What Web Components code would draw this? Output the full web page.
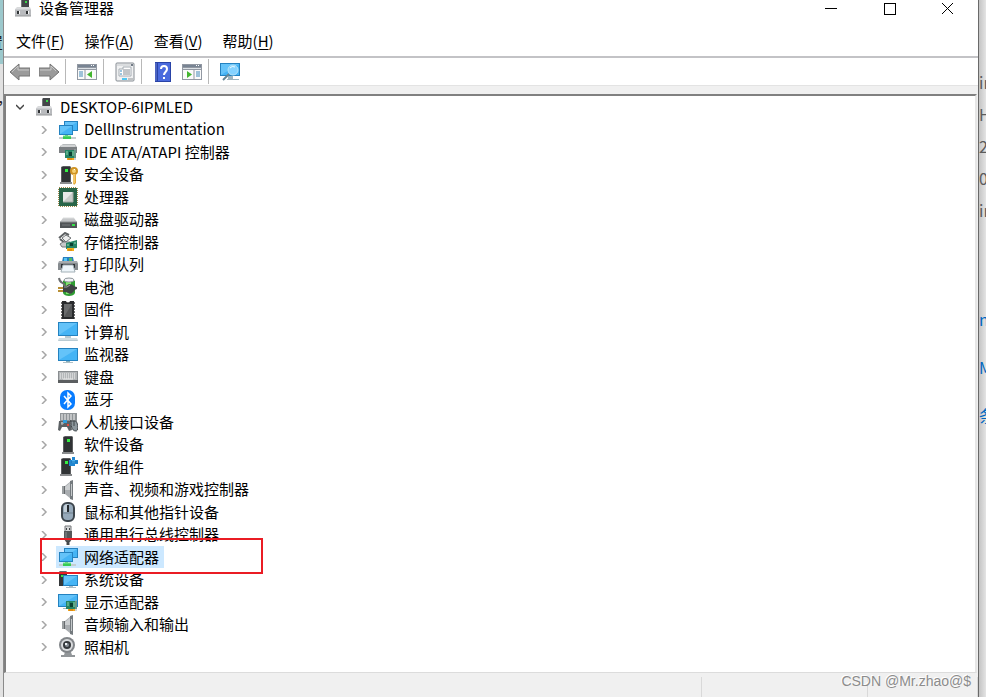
<!DOCTYPE html>
<html lang="zh-CN">
<head>
<meta charset="utf-8">
<meta name="viewport" content="width=device-width, initial-scale=1">
<title>设备管理器</title>
<style>
  html, body {
    height: 100%;
    margin: 0;
  }

  body {
    --color-bar: #f0f0f0;
    --color-line: #c3c3c6;
    --color-select: #cce8ff;
    display: grid;
    grid-template-columns: 4px minmax(0, 1fr) 7px;
    background: #e2e2e2;
    color: #000;
    font: 15px/20px "Noto Sans CJK SC", sans-serif;
    overflow: hidden;
  }
</style>
</head>
<body>
  <back-window side="left">
    <span>置</span>
    <span>,</span>
  </back-window>

  <device-manager heading="设备管理器">
    <menu-bar slot="menu">
      <menu-item key="F">文件</menu-item>
      <menu-item key="A">操作</menu-item>
      <menu-item key="V">查看</menu-item>
      <menu-item key="H">帮助</menu-item>
    </menu-bar>
    <tool-bar slot="tools">
      <tool-button icon="back" label="后退"></tool-button>
      <tool-button icon="forward" label="前进"></tool-button>
      <tool-separator></tool-separator>
      <tool-button icon="console" label="显示/隐藏控制台树"></tool-button>
      <tool-separator></tool-separator>
      <tool-button icon="properties" label="属性"></tool-button>
      <tool-separator></tool-separator>
      <tool-button icon="help" label="帮助"></tool-button>
      <tool-button icon="action" label="操作窗格"></tool-button>
      <tool-separator></tool-separator>
      <tool-button icon="scan" label="扫描检测硬件改动"></tool-button>
    </tool-bar>
    <device-node icon="computer" label="DESKTOP-6IPMLED" open>
      <device-node icon="network" label="DellInstrumentation"></device-node>
      <device-node icon="ide" label="IDE ATA/ATAPI 控制器"></device-node>
      <device-node icon="security" label="安全设备"></device-node>
      <device-node icon="cpu" label="处理器"></device-node>
      <device-node icon="disk" label="磁盘驱动器"></device-node>
      <device-node icon="storage" label="存储控制器"></device-node>
      <device-node icon="printer" label="打印队列"></device-node>
      <device-node icon="battery" label="电池"></device-node>
      <device-node icon="firmware" label="固件"></device-node>
      <device-node icon="desktop" label="计算机"></device-node>
      <device-node icon="monitor" label="监视器"></device-node>
      <device-node icon="keyboard" label="键盘"></device-node>
      <device-node icon="bluetooth" label="蓝牙"></device-node>
      <device-node icon="hid" label="人机接口设备"></device-node>
      <device-node icon="software" label="软件设备"></device-node>
      <device-node icon="component" label="软件组件"></device-node>
      <device-node icon="speaker" label="声音、视频和游戏控制器"></device-node>
      <device-node icon="mouse" label="鼠标和其他指针设备"></device-node>
      <device-node icon="usb" label="通用串行总线控制器"></device-node>
      <device-node icon="network" label="网络适配器" selected marked></device-node>
      <device-node icon="system" label="系统设备"></device-node>
      <device-node icon="display" label="显示适配器"></device-node>
      <device-node icon="speaker" label="音频输入和输出"></device-node>
      <device-node icon="camera" label="照相机"></device-node>
    </device-node>
    <status-bar slot="status"></status-bar>
  </device-manager>

  <back-window side="right">
    <span>in</span>
    <span>H</span>
    <span>2</span>
    <span>0</span>
    <span>in</span>
    <a slot="links" href="#">nd</a>
    <a slot="links" href="#">M</a>
    <a slot="links" href="#">条</a>
  </back-window>

  <water-mark>CSDN @Mr.zhao@$</water-mark>

<script>
// Shapes shared by several icons
const SCREEN = (x, y, w, h) => `
  <rect x="${x}" y="${y}" width="${w}" height="${h}" fill="#2482c0"/>
  <rect x="${x + 1}" y="${y + 1}" width="${w - 2}" height="${h - 2}" fill="#45b4f5"/>
  <path d="M${x + 1} ${y + h - 1}V${y + 1}h${w - 2}z" fill="#74cbfb" opacity=".65"/>`;

const TOWER = (x) => `
  <path d="M${x} 2l2-1h7l1 1v15h-10z" fill="#5b5d5f"/>
  <rect x="${x + 1}" y="2" width="8" height="15" fill="#303335"/>
  <rect x="${x + 4}" y="4" width="3" height="3" fill="#34ef43"/>
  <path d="M${x - 1} 17h12v2h-12z" fill="#8a8c8e"/>`;

const CARD = (x, y) => `
  <path d="M${x + 2} ${y + 7}h7v3h-7z" fill="#f3a51c"/>
  <path d="M${x + 4} ${y + 8}v2M${x + 6} ${y + 8}v2" stroke="#c77309"/>
  <path d="M${x} ${y}h11v8h-11z" fill="#258465"/>
  <path d="M${x + 1} ${y + 2}h2M${x + 1} ${y + 4}h2M${x + 8} ${y + 1}v5" stroke="#91d2a8"/>
  <rect x="${x + 4}" y="${y + 2}" width="3" height="4" fill="#0a4132"/>
  <path d="M${x + 10} ${y - 1}v11" stroke="#a8acae"/>`;

const COMPUTER = `
  <path d="M9 1h7v10h-7z" fill="#44474a"/>
  <path d="M8 2l1-1v10h-1z" fill="#75787a"/>
  <rect x="12" y="3" width="2" height="2" fill="#39db49"/>
  <path d="M3 10l1-1h13l1 3v6h-15z" fill="#d8dadb"/>
  <path d="M2 11h16v7h-16z" fill="#b9bbbe"/>
  <path d="M2 11h16" stroke="#dedfe1"/>
  <path d="M4 13h2v3h-2zM13 13h2v3h-2z" fill="#303335"/>
  <path d="M6 13h1v3h-1zM15 13h1v3h-1z" fill="#f7f7f7"/>
  <path d="M2 18h16" stroke="#96989a"/>`;

const PANE = `
  <path d="M0 2h20v16h-20z" fill="#9298a2"/>
  <path d="M1 3h18v2h-18z" fill="#788493"/>
  <path d="M14 3h1v1h-1zM16 3h1v1h-1z" fill="#fff"/>
  <path d="M1 6h18v1h-18z" fill="#dbe1e6"/>
  <path d="M1 8h18v9h-18z" fill="#fafafa"/>`;

const ICONS = {
  computer: COMPUTER,
  back: `
    <path d="M0 10L9 2v4h11v8h-11v4z" fill="#9b9b9b" stroke="#747474" stroke-linejoin="round"/>
    <path d="M2 10l6-6v4h11" fill="none" stroke="#c8c8c8"/>`,
  forward: `
    <path d="M20 10L11 2v4h-11v8h11v4z" fill="#9b9b9b" stroke="#747474" stroke-linejoin="round"/>
    <path d="M1 8h11v-4l5 5" fill="none" stroke="#c8c8c8"/>`,
  console: `${PANE}
    <path d="M2 10h4M2 12h4M2 14h4" stroke="#4389b8"/>
    <path d="M8 8v9" stroke="#9298a2"/>
    <path d="M15 9v7l-5-3.500z" fill="#43b52f"/>`,
  action: `${PANE}
    <path d="M14 10h4M14 12h4M14 14h4" stroke="#4389b8"/>
    <path d="M12 8v9" stroke="#9298a2"/>
    <path d="M5 9v7l5-3.500z" fill="#43b52f"/>`,
  properties: `
    <rect x="1" y="1" width="18" height="18" rx="1" fill="#f0f1f2" stroke="#858b92"/>
    <path d="M2 3h15" stroke="#c4c8cc"/>
    <path d="M16 2h2v2h-2z" fill="#717b86"/>
    <path d="M4 7h4v-2h8v9h-12z" fill="#fff" stroke="#a5acb3"/>
    <path d="M5 9h2M5 12h2" stroke="#398bbf"/>
    <path d="M8 8h7M8 10h7M8 12h7" stroke="#848b92"/>
    <path d="M7 16h5v2h-5z" fill="#51c7f2"/>
    <path d="M13 16h5v2h-5z" fill="#bfc2c4"/>`,
  help: `
    <path d="M2 0h16v20h-16z" fill="#2943a7"/>
    <path d="M5 1h12v18h-12z" fill="#4a6add"/>
    <path d="M3 1v18" stroke="#7087db"/>
    <path d="M8 7c0-4 6-4 6 0 0 3-3 3-3 6" fill="none" stroke="#fff" stroke-width="2"/>
    <rect x="10" y="15" width="2" height="2" fill="#fff"/>`,
  scan: `
    ${SCREEN(0, 1, 20, 13)}
    <path d="M8 14h5v3h-5zM7 17h12v1h-12z" fill="#9eb5bf"/>
    <circle cx="13" cy="8" r="5" fill="#84d2ff" stroke="#b4e2f8"/>
    <path d="M9 12l-6 6" stroke="#648594" stroke-width="2"/>
    <path d="M10 6a4 4 0 0 1 5-1" fill="none" stroke="#eefbff"/>`,
  network: `
    ${SCREEN(6, 1, 14, 10)}
    ${SCREEN(1, 5, 14, 10)}
    <path d="M7 15h3v2h-3z" fill="#4cc46d"/>
    <path d="M1 17h17v2h-17z" fill="#c5ced0"/>
    <path d="M5 16h8v3h-8z" fill="#37cb55"/>
    <path d="M5 16h8" stroke="#83e894"/>`,
  ide: `
    <path d="M2 4l3-2h12l2 3v4h-17z" fill="#b8bbbd"/>
    <path d="M1 5h18v6h-18z" fill="#7b7f82"/>
    <path d="M3 4h14" stroke="#ebecec"/>
    ${CARD(7, 8)}`,
  security: `
    ${TOWER(3)}
    <circle cx="16" cy="6" r="3" fill="#f6d173" stroke="#cf9324" stroke-width="2"/>
    <path d="M15 9h3v9l-2 2-1-2z" fill="#e4a937"/>
    <path d="M16 9v9" stroke="#ffe3a0"/>
    <path d="M16 4h1v1h-1z" fill="#fff"/>`,
  cpu: `
    <path d="M1 1h18v18h-18z" fill="none" stroke="#a28b4b" stroke-width="2" stroke-dasharray="1 1"/>
    <rect x="1" y="1" width="18" height="18" fill="#286548"/>
    <path d="M5 5h10v10h-10z" fill="#c9cdca"/>
    <path d="M5 15v-10h10z" fill="#e9ebe9"/>
    <path d="M5 15h10v-10" fill="none" stroke="#a4aaa5"/>`,
  disk: `
    <path d="M2 12l3-4h11l3 4z" fill="#c5c7c9"/>
    <path d="M5 8h11" stroke="#dddfdf"/>
    <path d="M2 12h17v6h-17z" fill="#505457"/>
    <path d="M2 12h17" stroke="#8b8e90"/>
    <path d="M4 15h8" stroke="#777b7e"/>
    <path d="M14 14h3v2h-3z" fill="#35e149"/>`,
  storage: `
    <path d="M1 6l6-5 4 2M2 7l5 4" fill="none" stroke="#5d6163" stroke-width="2"/>
    <path d="M4 6l4-3 5 3-5 4z" fill="#eceded" stroke="#707476"/>
    <path d="M2 12l3-2h7v5h-8z" fill="#c7c9ca" stroke="#777b7d"/>
    <path d="M8 11l11-3v8l-11 1z" fill="#258465"/>
    <path d="M9 16h7v3h-7z" fill="#f6ae1b"/>
    <path d="M11 17v2M13 17v2" stroke="#c97909"/>
    <path d="M12 11h3v3h-3z" fill="#0a4132"/>
    <path d="M9 13h2M16 11h2" stroke="#9bd6b2"/>`,
  printer: `
    <path d="M5 2h10l1 5h-12z" fill="#287fbd"/>
    <path d="M6 3h3v4h-3z" fill="#51c4f7"/>
    <path d="M11 3h3v4h-3z" fill="#53bd63"/>
    <path d="M1 6h18l1 3v6h-20v-6z" fill="#868b8f"/>
    <path d="M1 7h18" stroke="#c8cacc"/>
    <path d="M3 9h14v4h-14z" fill="#2e3336"/>
    <path d="M5 10h10l2 7h-14z" fill="#eef5fa" stroke="#a3b0b7"/>`,
  battery: `
    <path d="M7 3v-2h8v2z" fill="#c9ced1"/>
    <path d="M5 4c2-2 10-2 12 0v12c-1 4-11 4-12 0z" fill="#2f9d33"/>
    <path d="M8 4h5v13h-5z" fill="#7ee36a"/>
    <ellipse cx="11" cy="3" rx="5" ry="2" fill="#f1f2f6" stroke="#8f979c"/>
    <path d="M1 1c1 7 5 3 6 8" fill="none" stroke="#6b6e70" stroke-width="2"/>
    <path d="M5 9h3l3-2c5 0 4 3 8 3v2c-3 0-3 4-7 5l-4-2h-3z" fill="#3f4344"/>
    <path d="M6 10h3l3-2" fill="none" stroke="#9a9d9d"/>
    <path d="M0 11h5M0 14h5" stroke="#b88f34" stroke-width="2"/>`,
  firmware: `
    <path d="M3 3h14M3 6h14M3 9h14M3 12h14M3 15h14M3 18h14" stroke="#6c6c6c" stroke-width="2"/>
    <path d="M4 1h4l1 2h2l1-2h4v18h-12z" fill="#292b2d"/>
    <path d="M6 4h8v13h-8z" fill="#565859"/>
    <path d="M6 17v-13h8z" fill="#6a6c6d"/>`,
  desktop: `
    ${SCREEN(0, 0, 20, 14)}
    <path d="M7 14h6v2h-6z" fill="#b7c9d1"/>
    <path d="M1 16h18l1 3h-20z" fill="#b9cbd3"/>
    <path d="M1 17h18" stroke="#e7eff2"/>`,
  monitor: `
    ${SCREEN(0, 3, 20, 13)}
    <path d="M8 16h4v1h-4z" fill="#84aebd"/>
    <path d="M5 17h10v1h-10z" fill="#afc0c7"/>`,
  keyboard: `
    <path d="M0 4h20v12h-20z" fill="#898d90"/>
    <path d="M1 5h18v8h-18z" fill="#b3b6b8"/>
    <path d="M2 7h16M2 9h16M2 11h16" stroke="#f4f4f4" stroke-dasharray="1 1"/>
    <path d="M0 13h20v3h-20z" fill="#5b5e60"/>
    <path d="M5 12h10" stroke="#e9e9e9"/>`,
  bluetooth: `
    <rect x="2" y="0" width="15" height="20" rx="7" fill="#087cff"/>
    <path d="M6 6l7 8-3 3v-14l3 3-7 8" fill="none" stroke="#fff" stroke-width="1.500"/>`,
  hid: `
    <path d="M2 1h17v11h-17z" fill="#909598"/>
    <path d="M3 3h14M3 5h14M3 7h14" stroke="#f3f3f3" stroke-dasharray="2 1"/>
    <path d="M1 9h11l2 9-3 1-2-4h-5l-2 4-2-1z" fill="#5c6164"/>
    <path d="M12 9h5c3 0 4 10 1 10-5 0-5-7-5-10z" fill="#8d989e" stroke="#40474b"/>
    <path d="M16 9v5" stroke="#3d4447"/>
    <path d="M3 11h3M4 10v3" stroke="#c3c7c9"/>
    <rect x="5" y="8" width="4" height="3" fill="#319edc"/>
    <rect x="9" y="12" width="2" height="2" fill="#e74b3f"/>`,
  software: TOWER(5),
  component: `
    ${TOWER(3)}
    <path d="M11 3h3v-3h3v3h3v4h-3v2h-6z" fill="#2187d1"/>
    <path d="M14 3h3v3h-3z" fill="#4cb4f1"/>
    <path d="M13 5h7" stroke="#1b72b4"/>`,
  speaker: `
    <path d="M4 6h5v8h-5z" fill="#666a6d"/>
    <path d="M4 6h2v8h-2z" fill="#9b9fa1"/>
    <path d="M7 6l6-5v18l-6-5z" fill="#a9adb0"/>
    <path d="M7 7l6-5v8h-6z" fill="#cbced0"/>
    <path d="M12 1l3-1v20l-3-1z" fill="#747a7e"/>
    <path d="M13 4h1v12h-1z" fill="#c5c9cb"/>`,
  mouse: `
    <rect x="4" y="1" width="12" height="18" rx="5" fill="#96a9ba" stroke="#3d454c" stroke-width="2"/>
    <path d="M6 5c0-2 2-3 4-3v8h-4z" fill="#c3cfd8"/>
    <path d="M5 11h10" stroke="#70818e"/>
    <path d="M10 3v7" stroke="#24292d" stroke-width="2"/>`,
  usb: `
    <path d="M7 1h6v6h-6z" fill="#d5d7d8" stroke="#76797b"/>
    <path d="M8 3h1v2h-1zM11 3h1v2h-1z" fill="#414446"/>
    <path d="M6 6h8v8l-2 3h-4l-2-3z" fill="#55585a"/>
    <path d="M8 7v7" stroke="#8a8d8f"/>
    <path d="M10 16v4" stroke="#444749" stroke-width="3"/>`,
  system: `
    <path d="M1 2l1-1h6l1 1v14h-8z" fill="#34383a"/>
    <path d="M1 2h8" stroke="#9da1a3"/>
    <rect x="3" y="5" width="2" height="2" fill="#36e24a"/>
    ${SCREEN(5, 5, 15, 11)}
    <path d="M11 16h4v1h3v1h-10v-1h3z" fill="#adbdc5"/>`,
  display: `
    ${SCREEN(0, 2, 20, 13)}
    <path d="M5 16h8v1h-8z" fill="#a6b9c2"/>
    ${CARD(8, 9)}`,
  camera: `
    <path d="M7 15h6l1 3h3v2h-14v-2h3z" fill="#929699"/>
    <circle cx="9" cy="8" r="8" fill="#818589"/>
    <circle cx="9" cy="8" r="6" fill="#d8dadc"/>
    <circle cx="9" cy="8" r="4" fill="#34383b"/>
    <circle cx="9" cy="8" r="2" fill="#858c93"/>
    <path d="M7 6h2v2h-2z" fill="#eef2f4"/>`,
};

const html = (strings, ...values) => {
  const template = document.createElement('template');
  template.innerHTML = String.raw({ raw: strings }, ...values);
  return template;
};

class BaseElement extends HTMLElement {
  constructor() {
    super();
    this.attachShadow({ mode: 'open' });
    this.shadowRoot.appendChild(this.constructor.template.content.cloneNode(true));
  }

  $(selector) {
    return this.shadowRoot.querySelector(selector);
  }
}

class DeviceIcon extends BaseElement {
  static observedAttributes = ['name'];

  static template = html`
    <style>
      :host {
        display: block;
        flex: none;
        width: 20px;
        height: 20px;
      }
      svg { display: block; }
    </style>
    <svg width="20" height="20" viewBox="0 0 20 20" aria-hidden="true"></svg>
  `;

  attributeChangedCallback(name, previous, value) {
    this.$('svg').innerHTML = ICONS[value] || '';
  }
}

class MenuBar extends BaseElement {
  static template = html`
    <style>
      :host {
        display: flex;
        align-items: center;
        gap: 20px;
        height: 30px;
        padding: 10px 12px 0;
      }
    </style>
    <slot></slot>
  `;
}

class MenuItem extends BaseElement {
  static template = html`
    <style>
      :host { display: block; }
      button {
        border: 0;
        padding: 0;
        background: none;
        color: inherit;
        font: inherit;
        white-space: nowrap;
      }
      u { text-underline-offset: 2px; }
    </style>
    <button type="button"><slot></slot>(<u></u>)</button>
  `;

  connectedCallback() {
    this.$('u').textContent = this.getAttribute('key');
  }
}

class ToolBar extends BaseElement {
  static template = html`
    <style>
      :host {
        display: flex;
        align-items: center;
        gap: 9px;
        height: 27px;
        padding: 0 6px;
        border-top: 2px solid var(--color-line);
        border-bottom: 1px solid #e3e3e3;
      }
    </style>
    <slot></slot>
  `;
}

class ToolButton extends BaseElement {
  static template = html`
    <style>
      :host { display: block; }
      button {
        display: block;
        border: 0;
        padding: 0;
        background: none;
      }
    </style>
    <button type="button"><device-icon></device-icon></button>
  `;

  connectedCallback() {
    this.$('button').setAttribute('aria-label', this.getAttribute('label'));
    this.$('device-icon').setAttribute('name', this.getAttribute('icon'));
  }
}

class ToolSeparator extends BaseElement {
  static template = html`
    <style>
      :host {
        display: block;
        width: 1px;
        height: 25px;
        margin: 0 2px 0 -3px;
        background: #b8b8b8;
      }
    </style>
  `;
}

class DeviceNode extends BaseElement {
  static template = html`
    <style>
      :host { display: block; }
      /* rows take turns at 23 and 22 pixels */
      ::slotted(device-node) { --row-height: 22px; }
      ::slotted(device-node:nth-child(odd)) { --row-height: 23px; }
      .row {
        position: relative;
        display: flex;
        align-items: center;
        height: var(--row-height, 22px);
      }
      .expander {
        display: grid;
        place-items: center;
        width: 16px;
        height: 16px;
        margin-right: 4px;
        border: 0;
        padding: 0;
        background: none;
        color: #a6a6a6;
      }
      .expander svg {
        fill: none;
        stroke: currentColor;
        stroke-width: 1.5;
      }
      :host([open]) > .row .expander { color: #444; }
      :host([open]) > .row svg { transform: rotate(90deg); }
      .label {
        display: flex;
        align-items: center;
        gap: 6px;
        height: 100%;
        padding: 0 5px 0 2px;
        white-space: nowrap;
      }
      .label span { padding-bottom: 1px; }
      :host([selected]) .label { background: var(--color-select); }
      .children {
        display: none;
        padding-left: 24px;
      }
      :host([open]) > .children { display: block; }
      .mark { display: none; }
      :host([marked]) .mark {
        display: block;
        position: absolute;
        z-index: 1;
        left: 4px;
        top: -8px;
        width: 219px;
        height: 32px;
        border: 2px solid #ea1c24;
        pointer-events: none;
      }
    </style>
    <div class="row">
      <button class="expander" type="button">
        <svg width="8" height="8" viewBox="0 0 8 8"><path d="M2 0l4 4-4 4"/></svg>
      </button>
      <div class="label"><device-icon></device-icon><span></span></div>
      <div class="mark"></div>
    </div>
    <div class="children" role="group"><slot></slot></div>
  `;

  connectedCallback() {
    const label = this.getAttribute('label');
    this.setAttribute('role', 'treeitem');
    this.$('span').textContent = label;
    this.$('device-icon').setAttribute('name', this.getAttribute('icon'));

    const $expander = this.$('.expander');
    $expander.setAttribute('aria-label', label);
    $expander.addEventListener('click', () => this.toggleAttribute('open'));
  }
}

class StatusBar extends BaseElement {
  static template = html`
    <style>
      :host {
        display: grid;
        grid-template-columns: minmax(0, 1fr) 166px 110px;
        height: 20px;
        padding-top: 4px;
        background: var(--color-bar);
      }
      div { border-right: 1px solid #d9d9d9; }
    </style>
    <div></div><div></div><div></div>
  `;
}

class DeviceManager extends BaseElement {
  static template = html`
    <style>
      :host {
        display: flex;
        flex-direction: column;
        min-height: 100vh;
        box-sizing: border-box;
        border-right: 1px solid #696969;
        background: #fff;
      }
      header {
        display: flex;
        align-items: center;
        height: 16px;
        padding: 0 2px 0 9px;
      }
      h1 {
        flex: 1;
        margin: 0 0 0 6px;
        font: inherit;
      }
      header button {
        display: grid;
        place-items: center;
        width: 58px;
        height: 18px;
        border: 0;
        padding: 0;
        background: none;
      }
      header button svg {
        fill: none;
        stroke: #000;
      }
      main {
        flex: 1;
        display: flex;
        flex-direction: column;
        padding: 8px 1px 0 0;
        background: var(--color-bar);
      }
      .tree {
        flex: 1;
        padding: 0 6px 12px;
        border: 2px solid #808080;
        border-right-color: #e6e6e6;
        border-bottom: 1px solid #dcdcdc;
        background: #fff;
      }
    </style>
    <header>
      <device-icon name="computer"></device-icon>
      <h1></h1>
      <button type="button" aria-label="最小化">
        <svg width="13" height="13" viewBox="0 0 13 13" shape-rendering="crispEdges"><path d="M0 6.500h12"/></svg>
      </button>
      <button type="button" aria-label="最大化">
        <svg width="13" height="13" viewBox="0 0 13 13" shape-rendering="crispEdges"><path d="M1 1h11v11h-11z"/></svg>
      </button>
      <button type="button" aria-label="关闭">
        <svg width="13" height="13" viewBox="0 0 13 13"><path d="M1 1l11 11M12 1l-11 11"/></svg>
      </button>
    </header>
    <slot name="menu"></slot>
    <slot name="tools"></slot>
    <main>
      <div class="tree" role="tree"><slot></slot></div>
    </main>
    <slot name="status"></slot>
  `;

  connectedCallback() {
    this.$('h1').textContent = this.getAttribute('heading');
  }
}

// The edge of the window that lies behind this one
class BackWindow extends BaseElement {
  static template = html`
    <style>
      :host {
        display: block;
        overflow: hidden;
        white-space: nowrap;
        color: #5c5c5c;
        font-size: 16px;
        line-height: 32px;
      }
      :host([side="right"]) {
        padding-top: 66px;
        background: linear-gradient(90deg, #c4c4c4, #e4e4e4);
      }
      :host([side="left"]) {
        padding-top: 26px;
        background: linear-gradient(#9cc8cc 64px, #e2e2e2 64px);
        border-right: 1px solid #8a8a8a;
        color: #222;
      }
      ::slotted(span) { display: block; }
      :host([side="left"]) ::slotted(span) {
        height: 54px;
        direction: rtl;
      }
      .links {
        padding-top: 69px;
        line-height: 48px;
      }
      ::slotted(a) {
        display: block;
        color: #0067c0;
        text-decoration: none;
      }
    </style>
    <slot></slot>
    <div class="links"><slot name="links"></slot></div>
  `;
}

class WaterMark extends BaseElement {
  static template = html`
    <style>
      :host {
        position: absolute;
        right: 15px;
        bottom: 6px;
        color: #8c8c8c;
        font-family: "Liberation Sans", sans-serif;
        font-size: 14px;
        text-shadow: -1px -1px #fff;
      }
    </style>
    <slot></slot>
  `;
}

customElements.define('device-icon', DeviceIcon);
customElements.define('menu-bar', MenuBar);
customElements.define('menu-item', MenuItem);
customElements.define('tool-bar', ToolBar);
customElements.define('tool-button', ToolButton);
customElements.define('tool-separator', ToolSeparator);
customElements.define('device-node', DeviceNode);
customElements.define('status-bar', StatusBar);
customElements.define('device-manager', DeviceManager);
customElements.define('back-window', BackWindow);
customElements.define('water-mark', WaterMark);
</script>
</body>
</html>
